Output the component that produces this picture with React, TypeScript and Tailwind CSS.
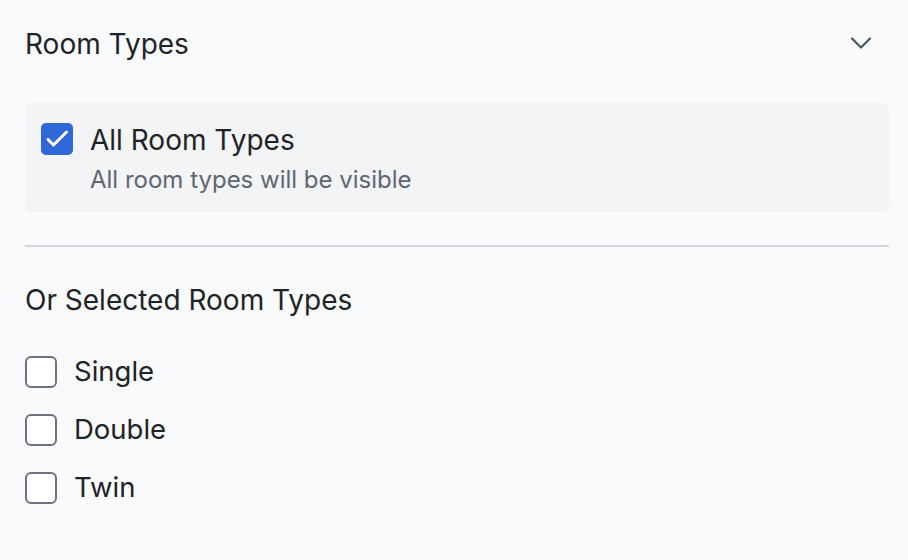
import React, { useState } from 'react';

const rooms = ['Single', 'Double', 'Twin'];

export default function App() {
  const [all, setAll] = useState(true);
  const [picked, setPicked] = useState<string[]>([]);

  return (
    <div
      className="w-[908px] h-[560px] bg-[#f9fafb] text-[#1f2328] pl-[25px] pr-[19px]"
      style={{ fontFamily: 'Inter, "Noto Sans", sans-serif' }}
    >
      {/* Kopfzeile */}
      <div className="flex items-center justify-between h-[88px] pr-[17px]">
        <h2 className="text-[28px] font-normal leading-none">Room Types</h2>
        <svg width="22" height="14" viewBox="0 0 22 14" fill="none" stroke="#4b5563" strokeWidth="2.2" strokeLinecap="round" strokeLinejoin="round" className="-mt-[2px]">
          <path d="M2 2.5l9 9 9-9" />
        </svg>
      </div>

      {/* Alle Zimmertypen */}
      <div className="mt-[15px] rounded-md bg-[#f3f4f6] pl-4 pt-5 pb-[17px] flex gap-[17px]">
        <button
          onClick={() => setAll(!all)}
          className={`w-8 h-8 shrink-0 rounded-[5px] flex items-center justify-center ${all ? 'bg-[#2f68d8]' : 'border-2 border-[#6b7280] bg-white'}`}
        >
          {all && (
            <svg width="32" height="32" viewBox="0 0 32 32" fill="none" stroke="white" strokeWidth="3" strokeLinecap="round" strokeLinejoin="round">
              <path d="M7 16.5l5.5 5.5L25.5 9" />
            </svg>
          )}
        </button>
        <div>
          <div className="text-[28px] leading-[34px]">All Room Types</div>
          <div className="text-[24px] leading-[30px] text-[#5f6672] mt-[8px]">All room types will be visible</div>
        </div>
      </div>

      <div className="mt-[33px] h-[2px] bg-[#d1d5db]" />

      <h3 className="mt-[36px] text-[28px] leading-[34px]">Or Selected Room Types</h3>

      <div className="mt-[39px] flex flex-col gap-[26px]">
        {rooms.map((r) => (
          <label key={r} className="flex items-center gap-[17px] h-8">
            <input
              type="checkbox"
              checked={picked.includes(r)}
              onChange={() => setPicked(picked.includes(r) ? picked.filter((p) => p !== r) : [...picked, r])}
              className="appearance-none w-8 h-8 rounded-[6px] border-2 border-[#6b7280] bg-white"
            />
            <span className="text-[27.5px] leading-none">{r}</span>
          </label>
        ))}
      </div>
    </div>
  );
}
